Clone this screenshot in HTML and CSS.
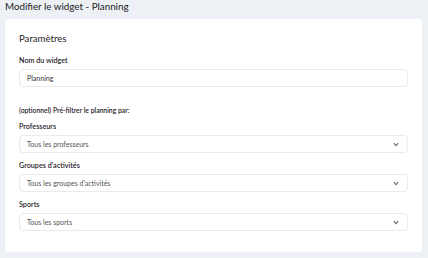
FILE: index.html
```html
<!DOCTYPE html>
<html>
<head>
    <title>Modifier le widget - Planning</title>
    <link rel="stylesheet" href="styles.css">
</head>
<body>
    <h1 class="page-title">Modifier le widget - Planning</h1>
    <div class="card">
        <h2 class="card-title">Paramètres</h2>
        <div class="field">
            <label class="label">Nom du widget</label>
            <div class="input">Planning</div>
        </div>
        <p class="hint">(optionnel) Pré-filtrer le planning par:</p>
        <div class="field">
            <label class="label">Professeurs</label>
            <div class="input select">
                <span>Tous les professeurs</span>
                <svg class="chevron" width="6" height="5" viewBox="0 0 6 5"><path d="M0.8 1.2 L3 3.6 L5.2 1.2" fill="none" stroke="#666" stroke-width="1.1"/></svg>
            </div>
        </div>
        <div class="field">
            <label class="label">Groupes d'activités</label>
            <div class="input select">
                <span>Tous les groupes d'activités</span>
                <svg class="chevron" width="6" height="5" viewBox="0 0 6 5"><path d="M0.8 1.2 L3 3.6 L5.2 1.2" fill="none" stroke="#666" stroke-width="1.1"/></svg>
            </div>
        </div>
        <div class="field last">
            <label class="label">Sports</label>
            <div class="input select">
                <span>Tous les sports</span>
                <svg class="chevron" width="6" height="5" viewBox="0 0 6 5"><path d="M0.8 1.2 L3 3.6 L5.2 1.2" fill="none" stroke="#666" stroke-width="1.1"/></svg>
            </div>
        </div>
    </div>
</body>
</html>
```

FILE: styles.css
```css
body {
    margin: 0;
    padding: 0 6px 0 5px;
    background-color: #edf0f5;
    font-family: Lato, "Noto Sans", sans-serif;
    color: #1f2329;
}

.page-title {
    margin: 0;
    height: 19px;
    line-height: 13px;
    font-size: 9.8px;
    font-weight: 400;
    color: #222;
}

.card {
    background-color: #fff;
    border-radius: 4px;
    padding: 13px 14px 21px 14px;
}

.card-title {
    margin: 0 0 10px 0;
    font-size: 9.6px;
    line-height: 14px;
    font-weight: 400;
}

.field {
    display: flex;
    flex-direction: column;
    margin-bottom: 8px;
}

.field.last {
    margin-bottom: 0;
}

.label {
    font-size: 7.2px;
    font-weight: 600;
    line-height: 9px;
    margin-bottom: 4px;
}

.input {
    height: 18px;
    box-sizing: border-box;
    border: 1px solid #e8eaed;
    border-radius: 4px;
    padding: 0 7px;
    font-size: 7px;
    line-height: 16px;
    color: #333;
}

.select {
    display: flex;
    justify-content: space-between;
    align-items: center;
    color: #555;
}

.chevron {
    margin-right: 1px;
}

.hint {
    margin: 19px 0 7px 0;
    font-size: 6.8px;
    font-weight: 600;
    line-height: 9px;
}
```
